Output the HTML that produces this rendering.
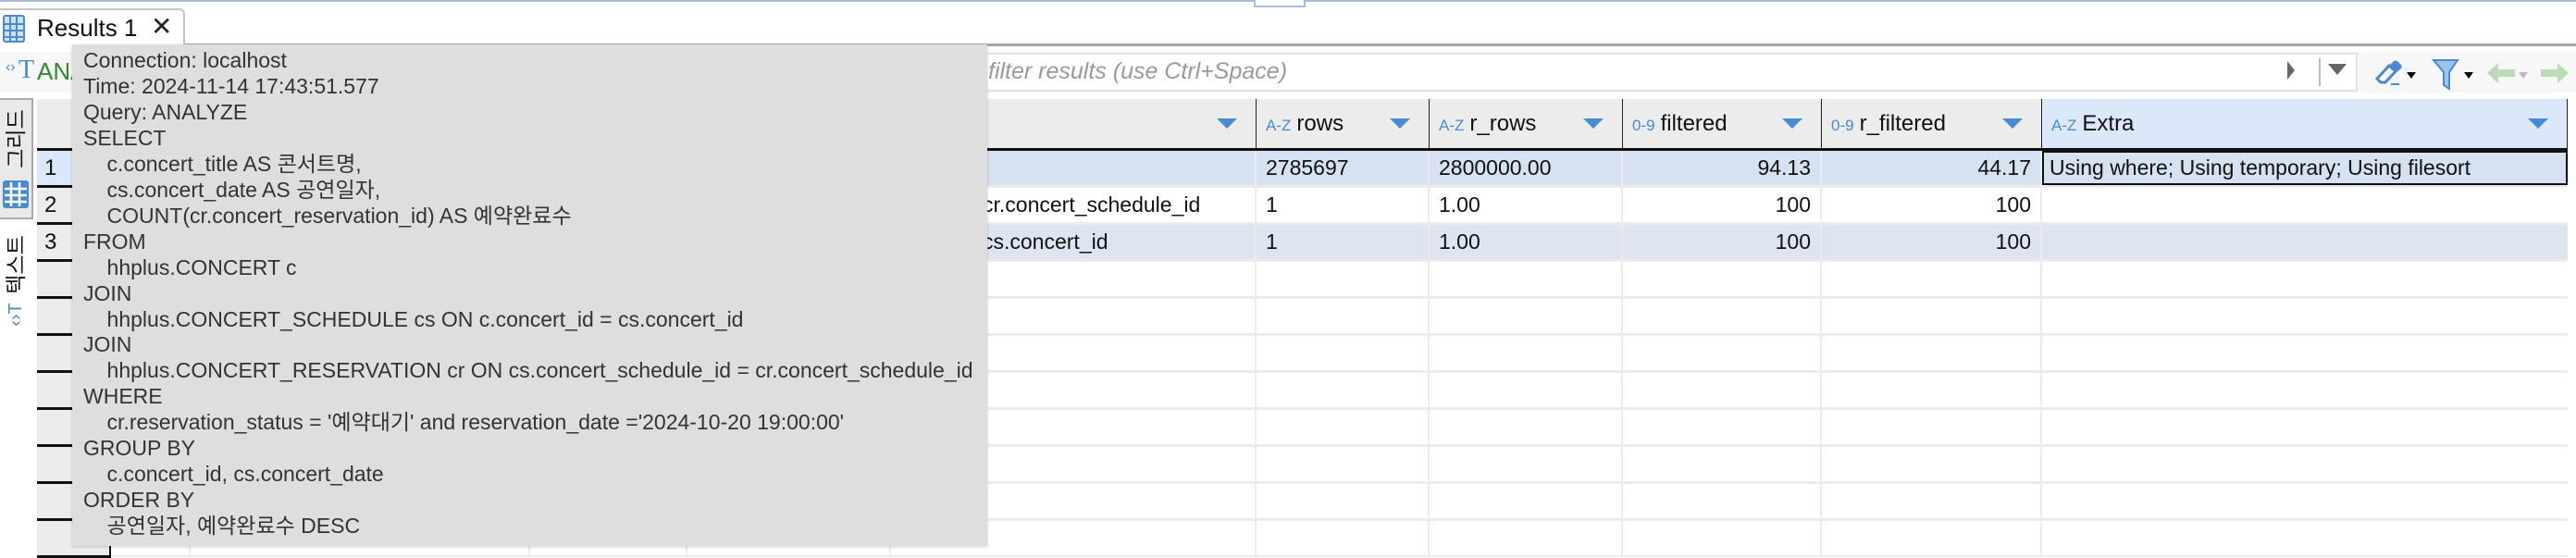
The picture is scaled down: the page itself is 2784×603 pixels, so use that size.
<!DOCTYPE html>
<html><head><meta charset="utf-8"><style>
*{margin:0;padding:0;box-sizing:border-box}
body{width:2784px;height:602px;overflow:hidden;background:#fff;font-family:"Liberation Sans","Noto Sans CJK KR",sans-serif;position:relative;color:#111}
.abs{position:absolute}
.topline{left:0;top:0;width:2784px;height:2px;background:#a9bdd8}
.tab{left:0;top:9px;width:200px;height:41px;background:#fff;border:2px solid #c4c4c4;border-left:none;border-bottom:none;border-top-right-radius:6px}
.hline{left:200px;top:47px;width:2584px;height:3px;background:#a8a8a8}
.filterband{left:0;top:56px;width:2784px;height:44px;background:#f7f7f7}
.fbox{left:600px;top:57px;width:1948px;height:42px;background:#fff;border:2px solid #e3e3e3}
.hdr{top:107px;height:53px;background:#ececec;border-right:1px solid #222}
.hl{position:absolute;top:0;height:53px;line-height:53px;font-size:24px;left:10px;white-space:nowrap}
.hl b{font-weight:normal;color:#4a8ad0;font-size:17px;margin-right:6px}
.tri{position:absolute;top:21px;right:20px;width:0;height:0;border-left:11px solid transparent;border-right:11px solid transparent;border-top:11px solid #4a8ad0}
.cell{height:37px;line-height:37px;font-size:23px;white-space:nowrap;overflow:hidden;padding:0 10px}
.r{text-align:right}
.tip{left:78px;top:48px;width:989px;height:542px;background:#dedede;box-shadow:0 1px 3px rgba(0,0,0,.2);z-index:10;padding:4px 0 0 12px;font-size:23px;line-height:27.95px;color:#333;white-space:pre}
.vt{position:absolute;width:80px;height:28px;line-height:28px;text-align:center;font-size:23px;transform:rotate(-90deg);white-space:nowrap}
</style></head><body>
<div class="abs topline"></div>
<div class="abs" style="left:1355px;top:0;width:56px;height:8px;border:2px solid #a9bdd8;border-top:none;background:#fff"></div>
<div class="abs hline"></div>
<div class="abs tab"></div>
<svg class="abs" style="left:3px;top:16px" width="24" height="30" viewBox="0 0 24 30"><rect x="1" y="1" width="22" height="28" rx="2" fill="#cfe0f5" stroke="#4a8ad0" stroke-width="2"/><path d="M1 10H23M1 17H23M1 24H23M8 1V29M15 1V29" stroke="#4a8ad0" stroke-width="2"/></svg>
<div class="abs" style="left:40px;top:13px;font-size:26px;line-height:34px">Results 1</div>
<div class="abs" style="left:163px;top:12px;font-size:28px;line-height:34px;color:#222">✕</div>

<div class="abs filterband"></div>
<div class="abs fbox"></div>
<div class="abs" style="left:6px;top:64px;font-size:16px;color:#4a8ad0">‹›</div>
<div class="abs" style="left:20px;top:60px;font-size:28px;font-family:'Liberation Serif',serif;color:#4a8ad0">T</div>
<div class="abs" style="left:40px;top:62px;font-size:26px;color:#2f8a2f">ANALYZE</div>
<div class="abs" style="left:1068px;top:63px;font-size:25px;color:#9a9a9a;font-style:italic">filter results (use Ctrl+Space)</div>
<div class="abs" style="left:2472px;top:66px;width:0;height:0;border-top:10px solid transparent;border-bottom:10px solid transparent;border-left:8px solid #666"></div>
<div class="abs" style="left:2506px;top:63px;width:2px;height:30px;background:#bbb"></div>
<div class="abs" style="left:2516px;top:69px;width:0;height:0;border-left:10px solid transparent;border-right:10px solid transparent;border-top:12px solid #666"></div>
<svg class="abs" style="left:2566px;top:63px" width="36" height="32" viewBox="0 0 36 32"><path d="M3 22L16 8l7 6-11 12H7z" fill="#fff" stroke="#4a8ad0" stroke-width="3"/><path d="M16 8l4-4c2-2 4-2 6 0l3 3c1 2 1 3-1 5l-5 4z" fill="#4a8ad0"/><path d="M18 28h9" stroke="#4a8ad0" stroke-width="2"/></svg>
<div class="abs" style="left:2601px;top:78px;border-left:5px solid transparent;border-right:5px solid transparent;border-top:7px solid #000"></div>
<svg class="abs" style="left:2628px;top:63px" width="30" height="36" viewBox="0 0 30 36"><path d="M2 2h26L19 15v18l-6-4V15z" fill="#9dc3ea" stroke="#4a8ad0" stroke-width="2"/></svg>
<div class="abs" style="left:2663px;top:78px;border-left:5px solid transparent;border-right:5px solid transparent;border-top:7px solid #000"></div>
<svg class="abs" style="left:2686px;top:66px" width="34" height="26" viewBox="0 0 34 26"><path d="M2 13L14 2v7h18v8H14v7z" fill="#bcdcb8"/></svg>
<div class="abs" style="left:2722px;top:78px;border-left:5px solid transparent;border-right:5px solid transparent;border-top:7px solid #bbb"></div>
<svg class="abs" style="left:2744px;top:66px" width="34" height="26" viewBox="0 0 34 26"><path d="M32 13L20 2v7H2v8h18v7z" fill="#bcdcb8"/></svg>

<!-- left side panel -->
<div class="abs" style="left:0;top:106px;width:36px;height:131px;background:#e9e9e9;border:2px solid #aaa;border-left:none"></div>
<div class="vt" style="left:-23px;top:136px">그리드</div>
<svg class="abs" style="left:2px;top:194px" width="30" height="32" viewBox="0 0 30 32"><rect x="1" y="1" width="28" height="30" rx="3" fill="#4a8ad0"/><path d="M3 10H27M3 17H27M3 24H27M10 3V29M19 3V29" stroke="#fff" stroke-width="2.5"/></svg>
<div class="vt" style="left:-23px;top:272px">텍스트</div>
<div class="vt" style="left:-23px;top:326px;color:#4a8ad0;font-size:20px">‹›T</div>

<!-- grid background rows -->
<div class="abs" style="left:119px;top:160px;width:2656px;height:442px;background:#ececec"></div>
<div id="rows"></div>
<!-- row number column -->
<div class="abs" style="left:40px;top:107px;width:80px;height:495px;background:#ececec;border-right:2px solid #111"></div>

<script>
(function(){
var cols=[119,206,573,743,963,1358,1545,1754,1969,2207,2775];
var html='';
var hdrs={5:['A-Z','rows'],6:['A-Z','r_rows'],7:['0-9','filtered'],8:['0-9','r_filtered'],9:['A-Z','Extra']};
for(var i=0;i<10;i++){var l=cols[i],w=cols[i+1]-l;
 var bg=i==9?'#dbe8fa':'#ececec';
 html+='<div class="abs hdr" style="left:'+l+'px;width:'+w+'px;background:'+bg+'">'+(hdrs[i]?'<div class="hl"><b>'+hdrs[i][0]+'</b>'+hdrs[i][1]+'</div>':'')+'<div class="tri"></div></div>';}
html+='<div class="abs" style="left:40px;top:160px;width:2735px;height:3px;background:#111;z-index:3"></div>';
var data=[['2785697','2800000.00','94.13','44.17','Using where; Using temporary; Using filesort'],['1','1.00','100','100',''],['1','1.00','100','100','']];
for(var r=0;r<11;r++){var yy=163+r*40;
 var bg=r==0?'#d6e2f1':(r==2?'#dde5f0':'#fff');
 for(var i=0;i<10;i++){var l=cols[i],w=cols[i+1]-l-(i==9?0:2);
  var t='',cls='cell';
  if(r<3&&i>=5){t=data[r][i-5];if(i==7||i==8)cls+=' r';}
  var st='';
  if(r==0&&i==9)st='border:2px solid #111;line-height:33px;padding-left:6px;';
  html+='<div class="abs '+cls+'" style="left:'+l+'px;top:'+yy+'px;width:'+w+'px;background:'+bg+';'+st+'">'+t+'</div>';}
 html+='<div class="abs" style="left:40px;top:'+(yy+37)+'px;width:80px;height:3px;background:#111;z-index:2"></div>';
 if(r<3)html+='<div class="abs" style="left:40px;top:'+yy+'px;width:78px;height:37px;line-height:37px;font-size:24px;padding-left:8px;z-index:2;background:'+(r==0?'#dbe8fa':'#ececec')+'">'+(r+1)+'</div>';
}
html+='<div class="abs cell" style="left:1062px;top:203px;padding:0">cr.concert_schedule_id</div>';
html+='<div class="abs cell" style="left:1062px;top:243px;padding:0">cs.concert_id</div>';
document.getElementById('rows').outerHTML=html;
})();
</script>

<div class="abs tip">Connection: localhost
Time: 2024-11-14 17:43:51.577
Query: ANALYZE
SELECT
    c.concert_title AS 콘서트명,
    cs.concert_date AS 공연일자,
    COUNT(cr.concert_reservation_id) AS 예약완료수
FROM
    hhplus.CONCERT c
JOIN
    hhplus.CONCERT_SCHEDULE cs ON c.concert_id = cs.concert_id
JOIN
    hhplus.CONCERT_RESERVATION cr ON cs.concert_schedule_id = cr.concert_schedule_id
WHERE
    cr.reservation_status = '예약대기' and reservation_date ='2024-10-20 19:00:00'
GROUP BY
    c.concert_id, cs.concert_date
ORDER BY
    공연일자, 예약완료수 DESC</div>
</body></html>
